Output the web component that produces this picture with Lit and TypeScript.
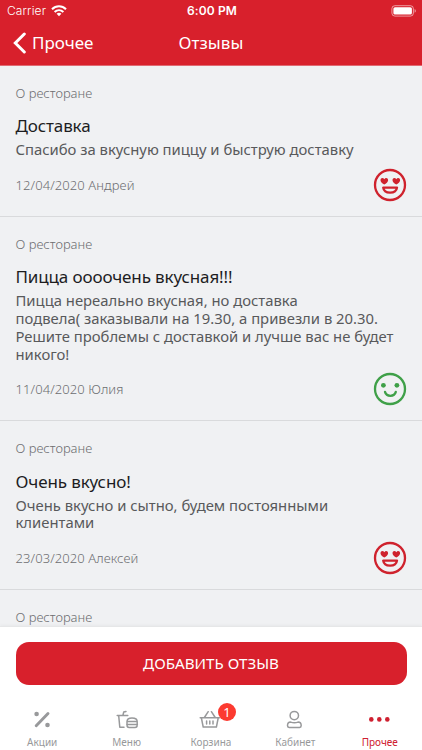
import { LitElement, html, css, svg } from "lit";
import { customElement, property } from "lit/decorators.js";

interface Review {
  title: string;
  lines: string[];
  meta: string;
  mood: "love" | "smile";
}

const reviews: Review[] = [
  { title: "Доставка", lines: ["Спасибо за вкусную пиццу и быструю доставку"], meta: "12/04/2020 Андрей", mood: "love" },
  {
    title: "Пицца оооочень вкусная!!!",
    lines: [
      "Пицца нереально вкусная, но доставка",
      "подвела( заказывали на 19.30, а привезли в 20.30.",
      "Решите проблемы с доставкой и лучше вас не будет",
      "никого!",
    ],
    meta: "11/04/2020 Юлия",
    mood: "smile",
  },
  { title: "Очень вкусно!", lines: ["Очень вкусно и сытно, будем постоянными", "клиентами"], meta: "23/03/2020 Алексей", mood: "love" },
];

const heart = "M0 3.6C-1.8 2.4-3.8 1-3.8-.8-3.8-3.2-1-3.6 0-1.7 1-3.6 3.8-3.2 3.8-.8 3.8 1 1.8 2.4 0 3.6Z";

@customElement("mood-face")
class MoodFace extends LitElement {
  @property() mood = "love";
  static styles = css`
    :host { display: block; width: 34px; height: 34px; }
    svg { display: block; }
    .love { color: #cf222d; }
    .smile { color: #3fa048; }
  `;
  render() {
    return html`<svg class=${this.mood} width="34" height="34" viewBox="0 0 34 34" fill="none" stroke="currentColor">
      <circle cx="17" cy="17" r="15" stroke-width="2.3" />
      ${this.mood === "love"
        ? svg`<path d=${heart} transform="translate(11.3 13)" fill="currentColor" stroke="none"/>
            <path d=${heart} transform="translate(23.3 13)" fill="currentColor" stroke="none"/>
            <path d="M10.2 19.6H24C23.5 23 20.8 24.7 17.1 24.7S10.7 23 10.2 19.6Z" stroke-width="2.3" stroke-linejoin="round"/>`
        : svg`<circle cx="10.4" cy="13.3" r="2.4" fill="currentColor" stroke="none"/>
            <circle cx="23.9" cy="13.3" r="2.4" fill="currentColor" stroke="none"/>
            <path d="M12 19.9C13.4 25.1 21.4 25.1 22.8 19.9" stroke-width="2.3" stroke-linecap="round"/>`}
    </svg>`;
  }
}

@customElement("app-root")
class AppRoot extends LitElement {
  static styles = css`
    :host {
      display: flex; flex-direction: column; width: 422px; height: 750px; overflow: hidden;
      background: #f0f1f3; font-family: "Noto Sans", sans-serif; color: #1d1d1f;
    }
    * { box-sizing: border-box; }
    svg { display: block; }
    header { flex: none; height: 66px; background: #d8202c; color: #fff; border-bottom: 1px solid #e06a73; }
    .status {
      height: 22px; display: grid; grid-template-columns: 1fr auto 1fr; align-items: center;
      padding: 0 5px 0 7px; font: 12px/22px Inter, sans-serif;
    }
    .carrier { display: flex; align-items: center; gap: 4.5px; font-weight: 300; letter-spacing: 0.12px; }
    .clock { font-weight: 600; letter-spacing: 0.1px; }
    .battery { justify-self: end; }
    .nav { height: 42px; display: grid; grid-template-columns: 1fr auto 1fr; align-items: center; }
    .back { display: flex; align-items: center; gap: 5px; font-size: 17px; line-height: 22px; padding-left: 13px; }
    .heading { font-size: 17px; line-height: 22px; letter-spacing: 0.1px; }
    main { flex: 1; min-height: 0; overflow: hidden; }
    .card { border-bottom: 1px solid #d9dadc; padding: 18px 15px 14px 15.5px; white-space: nowrap; }
    .about, .meta { font-size: 13px; font-weight: 300; color: #6c6d70; }
    .about { line-height: 18px; }
    .title { margin-top: 13.2px; font-size: 17px; line-height: 22px; letter-spacing: -0.12px; }
    .text { margin-top: 4.1px; font-size: 14.84px; line-height: 17.77px; color: #58595b; }
    .foot { margin-top: 9px; height: 34px; display: flex; justify-content: space-between; align-items: center; }
    .foot .meta { line-height: 32px; letter-spacing: 0.09px; }
    footer { flex: none; height: 124px; background: #fff; border-top: 1px solid #e6e7e8; padding: 15px 0 0; box-shadow: 0 -1px 3px #0000000a; }
    button {
      display: block; width: 391px; height: 43px; margin: 0 auto; border: 0; border-radius: 13px; padding: 0;
      background: #d8202c; color: #fff; font: 15.2px/43px "Noto Sans", sans-serif;
    }
    .tabs { display: grid; grid-template-columns: repeat(5, 1fr); padding-top: 22px; }
    .tab { display: flex; flex-direction: column; align-items: center; font-size: 10px; line-height: 14px; color: #98999b; }
    .icon { position: relative; height: 26px; margin-bottom: 2px; }
    .active { color: #cf2030; }
    .badge {
      position: absolute; left: 20px; top: -4px; width: 18px; height: 18px; border-radius: 50%;
      background: #fc3a30; color: #fff; font: 13px/18px "Noto Sans", sans-serif; text-align: center;
    }
  `;

  tab(label: string, cls: string, shape: unknown, badge = "") {
    return html`<div class="tab ${cls}">
      <div class="icon">
        <svg width="26" height="26" viewBox="0 0 26 26" fill="none" stroke="currentColor" stroke-width="1.5" stroke-linecap="round" stroke-linejoin="round">${shape}</svg>
        ${badge ? html`<span class="badge">${badge}</span>` : ""}
      </div>
      <span class="label">${label}</span>
    </div>`;
  }

  render() {
    return html`
      <header>
        <div class="status">
          <div class="carrier">Carrier
            <svg width="16" height="12" viewBox="0 0 16 12" fill="none" stroke="#fff" stroke-width="2">
              <path d="M1 4.3C5 .3 11 .3 15 4.3M3.6 7C6.2 4.5 9.8 4.5 12.4 7" />
              <path d="M5.6 8.7C7 7.4 9 7.4 10.4 8.7L8 11.2Z" fill="#fff" stroke="none" />
            </svg>
          </div>
          <div class="clock">6:00 PM</div>
          <svg class="battery" width="26" height="12" viewBox="0 0 26 12">
            <rect x=".9" y=".7" width="21.5" height="10.4" rx="3" fill="none" stroke="#fff" stroke-opacity=".55" />
            <rect x="2.4" y="2.2" width="18.5" height="7.4" rx="1.6" fill="#fff" />
            <path d="M23.6 4C25.2 4.6 25.2 7.2 23.6 7.8Z" fill="#fff" fill-opacity=".6" />
          </svg>
        </div>
        <div class="nav">
          <div class="back">
            <svg width="14" height="22" viewBox="0 0 14 22" fill="none" stroke="#fff" stroke-width="3" stroke-linecap="round"><path d="M11.3 2 2.3 11 11.3 20" /></svg>
            <span class="backtext">Прочее</span>
          </div>
          <div class="heading">Отзывы</div>
        </div>
      </header>
      <main>
        ${reviews.map(
          (r) => html`<section class="card">
            <div class="about">О ресторане</div>
            <div class="title">${r.title}</div>
            <div class="text">${r.lines.map((l) => html`${l}<br />`)}</div>
            <div class="foot"><span class="meta">${r.meta}</span><mood-face mood=${r.mood}></mood-face></div>
          </section>`
        )}
        <section class="card"><div class="about">О ресторане</div></section>
      </main>
      <footer>
        <button>ДОБАВИТЬ ОТЗЫВ</button>
        <nav class="tabs">
          ${this.tab("Акции", "", svg`<path d="M7.2 18.7 19 6.5" stroke-width="2.9"/><circle cx="7.6" cy="7" r="2.3" fill="currentColor" stroke="none"/><circle cx="18.5" cy="18" r="2.3" fill="currentColor" stroke="none"/>`)}
          ${this.tab("Меню", "", svg`<path d="M3.2 8.4H13.8M4.7 8.8 5.8 20.3H10M9 8 9.7 5.1 12 4.5"/><path d="M13 14.6C13 12 15.3 11 18 11S23.2 12 23.2 14.6ZM12.8 17.4H23.4M13 14.6V18.2C13 19.8 13.9 20.4 15.2 20.4H21C22.3 20.4 23.2 19.8 23.2 18.2V14.6"/>`)}
          ${this.tab("Корзина", "", svg`<path d="M2.2 10.8H21.4M3.4 11 5.2 20H18.4L20.2 11M6.4 10.5 10.2 4.7M17.2 10.5 13.4 4.7M8.6 14V17M11.8 14V17M15 14V17"/>`, "1")}
          ${this.tab("Кабинет", "", svg`<circle cx="12.3" cy="8.6" r="4.2"/><path d="M5.5 18.6C5.5 16.3 6.9 15.1 8.7 15.1 10.7 15.8 14 15.8 16 15.1 17.8 15.1 19.2 16.3 19.2 18.6 19.2 19.8 18.7 20.4 17.6 20.4H7.1C6 20.4 5.5 19.8 5.5 18.6Z"/>`)}
          ${this.tab("Прочее", "active", svg`<g fill="currentColor" stroke="none"><circle cx="4.3" cy="12.4" r="2.3"/><circle cx="12.3" cy="12.4" r="2.3"/><circle cx="20.3" cy="12.4" r="2.3"/></g>`)}
        </nav>
      </footer>
    `;
  }
}
